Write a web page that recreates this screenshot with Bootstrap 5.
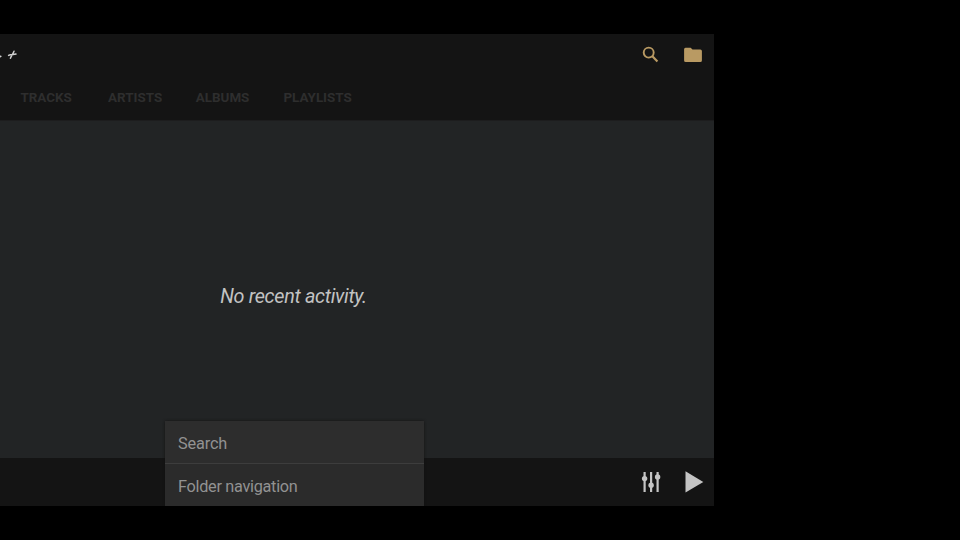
<!DOCTYPE html>
<html lang="en">
<head>
<meta charset="utf-8">
<meta name="viewport" content="width=device-width, initial-scale=1">
<title>Music player</title>
<link href="https://cdn.jsdelivr.net/npm/bootstrap@5.3.0/dist/css/bootstrap.min.css" rel="stylesheet">
<style>
body{background:#000;font-family:Roboto,sans-serif;height:540px;padding-top:34px}
.player{width:714px;height:472px;background:#222425}
.player-head{height:87px;background:#141414;border-bottom:1px solid #1d1d1e}
.head-tools{height:42px;padding:0 12px 0 0}
.brand-mark{width:20px;height:42px}
.head-tabs{height:44px;padding-left:20.4px}
.head-tabs .nav-link{color:#2e2e2e;font-size:13.4px;font-weight:700;line-height:16px;padding:0;margin-top:13.5px;white-space:nowrap}
.head-tabs .nav-item{width:87.7px}
.head-tabs .clip-tab{width:53.5px;overflow:hidden}
.empty-note{color:#c3c3c3;font-size:19.8px;letter-spacing:-.32px;font-style:italic;line-height:24px;padding:14px 0 0 0;width:587px}
.player-foot{height:48px;background:#141414;padding-right:10px}
.icon-btn{color:#b99a63;line-height:0}
.gap-start{margin-left:24px}
.foot-btn{color:#c4c4c4}
.option-menu{left:164.5px;top:387px;width:259px;height:85px;background:#2b2b2b;border-radius:2px 2px 0 0;box-shadow:0 0 3px #111}
.option-menu .list-group-item{background:#2b2b2b;color:#929292;border:0;border-radius:0;font-size:16.3px;letter-spacing:-.14px;line-height:20px;padding:13px 13.5px 9px;height:42px}
.option-menu .list-group-item + .list-group-item{letter-spacing:-.3px}
.option-menu .list-group-item:first-child{background:#2d2d2d;border-bottom:1px solid #3d3d3d;height:43px}
</style>
</head>
<body>
<div class="player position-relative overflow-hidden d-flex flex-column">
  <header class="player-head flex-shrink-0">
    <div class="head-tools d-flex align-items-center">
      <svg class="brand-mark" viewBox="0 0 20 42" fill="none" stroke="#cfcfcf" stroke-linecap="round"><path d="M0 22.7l.8-.4" stroke-width="1.6"/><path d="M8.6 21.4c2-1.3 4.8-.7 7.4-1.3M14 17.2c-.8 2.2-2.7 4.8-3.6 7" stroke-width="1.5"/></svg>
      <a href="#" class="icon-btn ms-auto" aria-label="Search"><svg width="18" height="42" viewBox="0 0 18 42" fill="none" stroke="currentColor"><circle cx="6.7" cy="18.6" r="5" stroke-width="1.9"/><path d="M10.4 22.2l5 5.2" stroke-width="2.2"/></svg></a>
      <a href="#" class="icon-btn gap-start" aria-label="Folder navigation"><svg width="18" height="42" viewBox="0 0 18 42" fill="currentColor"><path d="M1.5 13.8h5.2l1.8 1.7h7.8q1.6 0 1.6 1.6v9.3q0 1.6-1.6 1.6H1.7Q.1 28 .1 26.4V15.3q0-1.5 1.4-1.5z"/></svg></a>
    </div>
    <ul class="nav head-tabs flex-nowrap">
      <li class="nav-item"><a class="nav-link" href="#">TRACKS</a></li>
      <li class="nav-item"><a class="nav-link clip-tab" href="#">ARTISTS</a></li>
      <li class="nav-item"><a class="nav-link" href="#">ALBUMS</a></li>
      <li class="nav-item"><a class="nav-link" href="#">PLAYLISTS</a></li>
    </ul>
  </header>
  <main class="flex-grow-1 d-flex align-items-center">
    <p class="empty-note text-center mb-0">No recent activity.</p>
  </main>
  <footer class="player-foot flex-shrink-0 d-flex align-items-center justify-content-end">
    <a href="#" class="icon-btn foot-btn" aria-label="Equalizer"><svg width="20" height="48" viewBox="0 0 20 48" fill="currentColor"><path d="M2.5 14h2.2v20H2.500zM9 14h2.200v20H9zM15.500 14h2.200v20h-2.200z"/><circle cx="3.600" cy="20.600" r="2.700"/><circle cx="10.100" cy="27.200" r="2.700"/><circle cx="16.600" cy="19" r="2.700"/></svg></a>
    <a href="#" class="icon-btn foot-btn gap-start" aria-label="Play"><svg width="19" height="48" viewBox="0 0 19 48" fill="currentColor"><path d="M.5 13.200L18.300 23.900.5 34.500z"/></svg></a>
  </footer>
  <div class="option-menu list-group position-absolute overflow-visible">
    <a href="#" class="list-group-item">Search</a>
    <a href="#" class="list-group-item">Folder navigation</a>
  </div>
</div>
<script src="https://cdn.jsdelivr.net/npm/bootstrap@5.3.0/dist/js/bootstrap.bundle.min.js"></script>
</body>
</html>
